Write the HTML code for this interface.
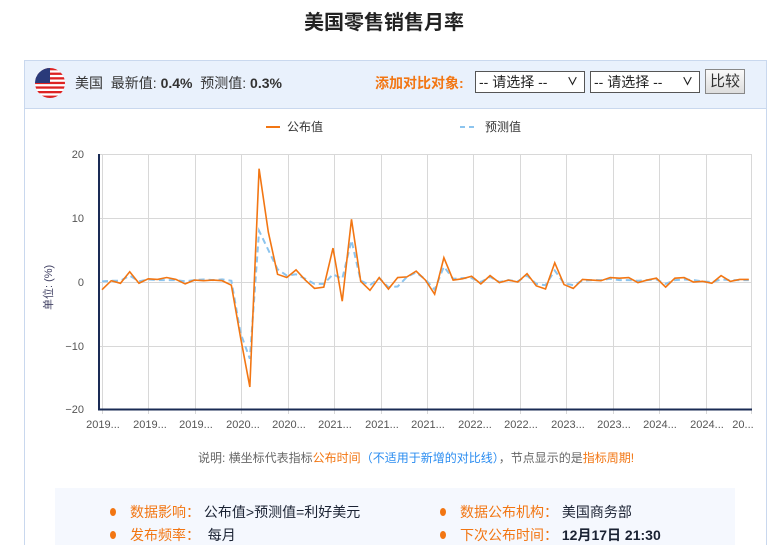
<!DOCTYPE html>
<html><head><meta charset="utf-8"><style>
html,body{margin:0;width:768px;height:545px;overflow:hidden;background:#fff;font-family:"Liberation Sans","Noto Sans CJK SC",sans-serif;position:relative}
.t{position:absolute;left:0;width:768px;top:6px;text-align:center;font-size:20px;font-weight:bold;color:#222}
.panel{position:absolute;left:24px;top:60px;width:741px;height:500px;border:1px solid #c9d8ee;border-bottom:none}
.hd{position:absolute;left:0;top:0;width:741px;height:47px;background:#e9f1fc;border-bottom:1px solid #c9d8ee;font-size:14px;color:#333}
.a{position:absolute;top:12px;white-space:nowrap}
.info{position:absolute;left:55px;top:488px;width:680px;height:60px;background:#f5f8fe;font-size:14px}
.info div{position:absolute;white-space:nowrap;color:#1a2233}
.info b{color:#f27613;font-weight:normal}
.dot{display:inline-block;width:6px;height:8px;border-radius:50%;background:#f27613;margin-right:14px;vertical-align:1px}
.s{position:absolute;top:10px;width:110px;height:22px;border:1px solid #555;background:#fff;font-size:14px;line-height:20px;padding-left:3px;box-sizing:border-box;color:#222}
.s i{position:absolute;right:6px;top:0;font-style:normal;font-size:11px;font-weight:bold}
</style></head><body>
<div class="t">美国零售销售月率</div>
<div class="panel">
<div class="hd">
<svg style="position:absolute;left:10px;top:7px" width="30" height="30" viewBox="0 0 30 30"><defs><clipPath id="c"><circle cx="15" cy="15" r="15"/></clipPath></defs><g clip-path="url(#c)"><rect width="30" height="30" fill="#fff"/><g fill="#d22"><rect y="0" width="30" height="2.3"/><rect y="4.6" width="30" height="2.3"/><rect y="9.2" width="30" height="2.3"/><rect y="13.8" width="30" height="2.3"/><rect y="18.4" width="30" height="2.3"/><rect y="23" width="30" height="2.3"/><rect y="27.6" width="30" height="2.4"/></g><rect width="15" height="15" fill="#2a3a7a"/></g></svg>
<span class="a" style="left:50px">美国&nbsp; 最新值: <b>0.4%</b>&nbsp; 预测值: <b>0.3%</b></span>
<span class="a" style="left:350px;color:#f27613;font-weight:bold">添加对比对象:</span>
<span class="s" style="left:450px">-- 请选择 --<i>∨</i></span>
<span class="s" style="left:565px">-- 请选择 --<i>∨</i></span>
<span style="position:absolute;left:680px;top:8px;width:40px;height:25px;border:1px solid #888;background:linear-gradient(#fafafa,#ddd);font-size:15px;line-height:23px;text-align:center;box-sizing:border-box">比较</span>
</div>
</div>
<svg style="position:absolute;left:0;top:0" width="768" height="545">
<g font-size="12" fill="#333"><line x1="266" y1="127" x2="280" y2="127" stroke="#f27613" stroke-width="2"/><text x="287" y="131">公布值</text>
<line x1="460" y1="127" x2="465" y2="127" stroke="#8cc4ee" stroke-width="2"/><line x1="469" y1="127" x2="474" y2="127" stroke="#8cc4ee" stroke-width="2"/><text x="485" y="131">预测值</text></g>
<g stroke="#d8d8d8" stroke-width="1">
<line x1="100" y1="154.5" x2="752" y2="154.5"/><line x1="100" y1="218.5" x2="752" y2="218.5"/><line x1="100" y1="282.5" x2="752" y2="282.5"/><line x1="100" y1="346.5" x2="752" y2="346.5"/>
<line x1="102.5" y1="154" x2="102.5" y2="414"/><line x1="148.5" y1="154" x2="148.5" y2="414"/><line x1="195.5" y1="154" x2="195.5" y2="414"/><line x1="241.5" y1="154" x2="241.5" y2="414"/><line x1="288.5" y1="154" x2="288.5" y2="414"/><line x1="334.5" y1="154" x2="334.5" y2="414"/><line x1="381.5" y1="154" x2="381.5" y2="414"/><line x1="427.5" y1="154" x2="427.5" y2="414"/><line x1="473.5" y1="154" x2="473.5" y2="414"/><line x1="520.5" y1="154" x2="520.5" y2="414"/><line x1="566.5" y1="154" x2="566.5" y2="414"/><line x1="613.5" y1="154" x2="613.5" y2="414"/><line x1="659.5" y1="154" x2="659.5" y2="414"/><line x1="706.5" y1="154" x2="706.5" y2="414"/><line x1="751.5" y1="154" x2="751.5" y2="414"/>
</g>
<line x1="99" y1="154" x2="99" y2="410" stroke="#1a2b55" stroke-width="2"/>
<line x1="98" y1="409.5" x2="752" y2="409.5" stroke="#1a2b55" stroke-width="2"/>
<g font-size="11" fill="#555" text-anchor="end"><text x="84" y="158">20</text><text x="84" y="222">10</text><text x="84" y="286">0</text><text x="84" y="350">−10</text><text x="84" y="413">−20</text></g>
<text transform="translate(52,310) rotate(-90)" font-size="11" fill="#446">单位: (%)</text>
<g font-size="11" fill="#555" text-anchor="middle"><text x="103" y="428">2019...</text><text x="150" y="428">2019...</text><text x="196" y="428">2019...</text><text x="243" y="428">2020...</text><text x="289" y="428">2020...</text><text x="335" y="428">2021...</text><text x="382" y="428">2021...</text><text x="428" y="428">2021...</text><text x="475" y="428">2022...</text><text x="521" y="428">2022...</text><text x="568" y="428">2023...</text><text x="614" y="428">2023...</text><text x="660" y="428">2024...</text><text x="707" y="428">2024...</text><text x="743" y="428">20...</text></g>
<g transform="translate(102,282) scale(9.24,-6.4)" fill="none">
<polyline vector-effect="non-scaling-stroke" stroke="#8cc4ee" stroke-width="2" stroke-dasharray="6,4" points="0,0.1 1,0.2 2,0.2 3,1 4,0.1 5,0.4 6,0.3 7,0.3 8,0.3 9,0.1 10,0.3 11,0.4 12,0.3 13,0.4 14,0.2 15,-8 16,-12 17,8 18,5 19,2 20,1 21,1.2 22,0.5 23,-0.3 24,-0.3 25,1.2 26,0.5 27,6.5 28,0.2 29,-0.5 30,0.6 31,-0.8 32,-0.7 33,0.8 34,1.5 35,0.4 36,-1.2 37,2.4 38,0.5 39,0.6 40,0.6 41,0 42,0.8 43,0 44,0.3 45,0.1 46,1 47,-0.3 48,-0.5 49,1.8 50,-0.2 51,-0.5 52,0.2 53,0.3 54,0.3 55,0.5 56,0.3 57,0.3 58,0.2 59,0.3 60,0.4 61,-0.3 62,0.3 63,0.4 64,0.3 65,0.1 66,0 67,0.4 68,0.3 69,0.3 70,0.3"/>
<polyline vector-effect="non-scaling-stroke" stroke="#f27613" stroke-width="1.6" points="0,-1.2 1,0.2 2,-0.2 3,1.6 4,-0.2 5,0.5 6,0.4 7,0.7 8,0.4 9,-0.3 10,0.3 11,0.2 12,0.3 13,0.2 14,-0.5 15,-8.7 16,-16.4 17,17.7 18,7.8 19,1.2 20,0.7 21,1.9 22,0.3 23,-1.0 24,-0.8 25,5.3 26,-3.0 27,9.8 28,0.1 29,-1.3 30,0.7 31,-1.1 32,0.7 33,0.8 34,1.7 35,0.3 36,-1.9 37,3.8 38,0.3 39,0.5 40,0.9 41,-0.3 42,1.0 43,-0.1 44,0.3 45,0 46,1.3 47,-0.6 48,-1.1 49,3.0 50,-0.4 51,-1.0 52,0.4 53,0.3 54,0.2 55,0.7 56,0.6 57,0.7 58,-0.1 59,0.3 60,0.6 61,-0.8 62,0.6 63,0.7 64,0 65,0.1 66,-0.2 67,1.0 68,0.1 69,0.4 70,0.4"/>
</g>
<text x="198" y="462" font-size="12" fill="#666">说明: 横坐标代表指标<tspan fill="#f27613">公布时间</tspan><tspan fill="#2a8cf0">（不适用于新增的对比线）</tspan>，节点显示的是<tspan fill="#f27613">指标周期</tspan><tspan fill="#f27613">!</tspan></text>
</svg>
<div class="info">
<div style="left:55px;top:14px"><span class="dot"></span><b>数据影响：</b> 公布值&gt;预测值=利好美元</div>
<div style="left:385px;top:14px"><span class="dot"></span><b>数据公布机构：</b> 美国商务部</div>
<div style="left:55px;top:37px"><span class="dot"></span><b>发布频率：</b>&nbsp; 每月</div>
<div style="left:385px;top:37px"><span class="dot"></span><b>下次公布时间：</b> <span style="font-weight:bold">12月17日 21:30</span></div>
</div>
</body></html>
